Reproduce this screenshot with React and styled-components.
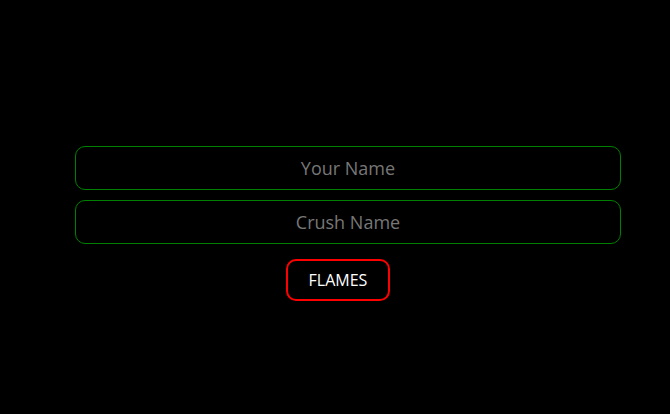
import React from "react";
import styled, { createGlobalStyle } from "styled-components";

const GlobalStyle = createGlobalStyle`
  html, body {
    margin: 0;
    padding: 0;
    background: #000;
    font-family: "Open Sans", "Noto Sans", sans-serif;
  }
`;

const Page = styled.div`
  width: 670px;
  height: 414px;
  background: #000;
  box-sizing: border-box;
  padding: 146px 0 0 75px;
`;

const Form = styled.form`
  width: 546px;
  display: flex;
  flex-direction: column;
  align-items: center;
  gap: 10px;
`;

const Input = styled.input`
  width: 100%;
  height: 44px;
  box-sizing: border-box;
  background: #000;
  border: 1px solid #008000;
  border-radius: 10px;
  color: #fff;
  font-family: inherit;
  font-size: 18px;
  text-align: center;
  outline: none;

  &::placeholder {
    color: #777;
  }
`;

const Button = styled.button`
  margin-top: 5px;
  margin-right: 20px;
  width: 104px;
  height: 42px;
  box-sizing: border-box;
  background: #000;
  color: #fff;
  border: 2px solid #ff0000;
  border-radius: 10px;
  font-family: inherit;
  font-size: 16px;
  cursor: pointer;
`;

const App = () => {
  return (
    <Page>
      <GlobalStyle />
      <Form onSubmit={(e) => e.preventDefault()}>
        <Input type="text" placeholder="Your Name" />
        <Input type="text" placeholder="Crush Name" />
        <Button type="submit">FLAMES</Button>
      </Form>
    </Page>
  );
};

export default App;
